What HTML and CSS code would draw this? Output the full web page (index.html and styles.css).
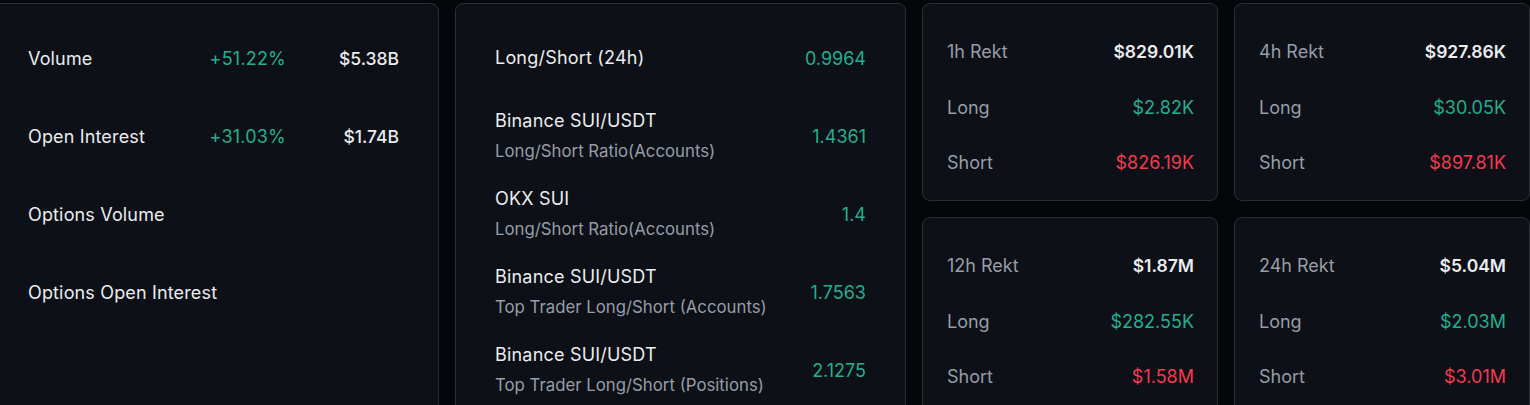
FILE: index.html
```html
<!DOCTYPE html>
<html>
<head>
<meta charset="utf-8">
<link rel="stylesheet" href="styles.css">
</head>
<body>
<div class="page">
  <section class="card card-market">
    <div class="mrow"><span class="label">Volume</span><span class="pct up">+51.22%</span><span class="val">$5.38B</span></div>
    <div class="mrow"><span class="label">Open Interest</span><span class="pct up">+31.03%</span><span class="val">$1.74B</span></div>
    <div class="mrow"><span class="label">Options Volume</span><span class="pct"></span><span class="val"></span></div>
    <div class="mrow"><span class="label">Options Open Interest</span><span class="pct"></span><span class="val"></span></div>
  </section>
  <section class="card card-ratio">
    <div class="rrow"><div class="rtext"><div class="rtitle">Long/Short (24h)</div></div><span class="rval up">0.9964</span></div>
    <div class="rrow"><div class="rtext"><div class="rtitle">Binance SUI/USDT</div><div class="rsub">Long/Short Ratio(Accounts)</div></div><span class="rval up">1.4361</span></div>
    <div class="rrow"><div class="rtext"><div class="rtitle">OKX SUI</div><div class="rsub">Long/Short Ratio(Accounts)</div></div><span class="rval up">1.4</span></div>
    <div class="rrow"><div class="rtext"><div class="rtitle">Binance SUI/USDT</div><div class="rsub">Top Trader Long/Short (Accounts)</div></div><span class="rval up">1.7563</span></div>
    <div class="rrow"><div class="rtext"><div class="rtitle">Binance SUI/USDT</div><div class="rsub">Top Trader Long/Short (Positions)</div></div><span class="rval up">2.1275</span></div>
  </section>
  <div class="rekt-grid">
    <section class="card card-rekt">
      <div class="krow"><span class="klabel">1h Rekt</span><span class="ktotal">$829.01K</span></div>
      <div class="krow"><span class="klabel">Long</span><span class="kval up">$2.82K</span></div>
      <div class="krow"><span class="klabel">Short</span><span class="kval down">$826.19K</span></div>
    </section>
    <section class="card card-rekt">
      <div class="krow"><span class="klabel">4h Rekt</span><span class="ktotal">$927.86K</span></div>
      <div class="krow"><span class="klabel">Long</span><span class="kval up">$30.05K</span></div>
      <div class="krow"><span class="klabel">Short</span><span class="kval down">$897.81K</span></div>
    </section>
    <section class="card card-rekt">
      <div class="krow"><span class="klabel">12h Rekt</span><span class="ktotal">$1.87M</span></div>
      <div class="krow"><span class="klabel">Long</span><span class="kval up">$282.55K</span></div>
      <div class="krow"><span class="klabel">Short</span><span class="kval down">$1.58M</span></div>
    </section>
    <section class="card card-rekt">
      <div class="krow"><span class="klabel">24h Rekt</span><span class="ktotal">$5.04M</span></div>
      <div class="krow"><span class="klabel">Long</span><span class="kval up">$2.03M</span></div>
      <div class="krow"><span class="klabel">Short</span><span class="kval down">$3.01M</span></div>
    </section>
  </div>
</div>
</body>
</html>
```
FILE: styles.css
```css
* { box-sizing: border-box; }
html, body { margin: 0; padding: 0; }
body {
  background: #040609;
  font-family: Inter, "Noto Sans", sans-serif;
  font-size: 18px;
  color: #eaecef;
  overflow: hidden;
  height: 405px;
}
.page {
  display: flex;
  gap: 16px;
  padding-top: 3px;
  margin-left: -12px;
  width: 1542px;
}
.card {
  background: #0d1016;
  border: 1px solid #2b2e35;
  border-radius: 8px;
  min-width: 0;
}
.up { color: #25ae8e; }
.down { color: #f23a50; }

.card-market {
  flex: 0 0 451px;
  height: 440px;
  padding: 15px 39px 0 39px;
}
.mrow {
  display: grid;
  grid-template-columns: minmax(0, 1fr) 100px 113px;
  align-items: center;
  height: 78px;
  white-space: nowrap;
}
.label { font-weight: 400; letter-spacing: 0.15px; }
.pct { text-align: right; letter-spacing: 0.2px; }
.val { text-align: right; font-weight: 500; font-size: 17.5px; }

.card-ratio {
  flex: 0 0 451px;
  height: 440px;
  padding: 15px 39px 0 39px;
}
.rrow {
  display: flex;
  align-items: center;
  justify-content: space-between;
  height: 78px;
}
.rtitle { line-height: 30px; font-weight: 400; letter-spacing: 0.2px; }
.rsub { line-height: 30px; color: #969da8; font-size: 16.8px; }
.rval { font-size: 18px; }

.rekt-grid {
  flex: 1 1 auto;
  min-width: 0;
  display: grid;
  grid-template-columns: minmax(0, 1fr) minmax(0, 1fr);
  gap: 16px;
  align-content: start;
}
.card-rekt {
  height: 198px;
  padding: 36px 23px 0 24px;
  display: flex;
  flex-direction: column;
  gap: 31.5px;
}
.krow {
  display: flex;
  justify-content: space-between;
  align-items: center;
  line-height: 24px;
  height: 24px;
  white-space: nowrap;
}
.klabel { color: #969da8; font-size: 18px; }
.ktotal { font-weight: 600; font-size: 17.5px; }
.kval { font-size: 18px; }
```
